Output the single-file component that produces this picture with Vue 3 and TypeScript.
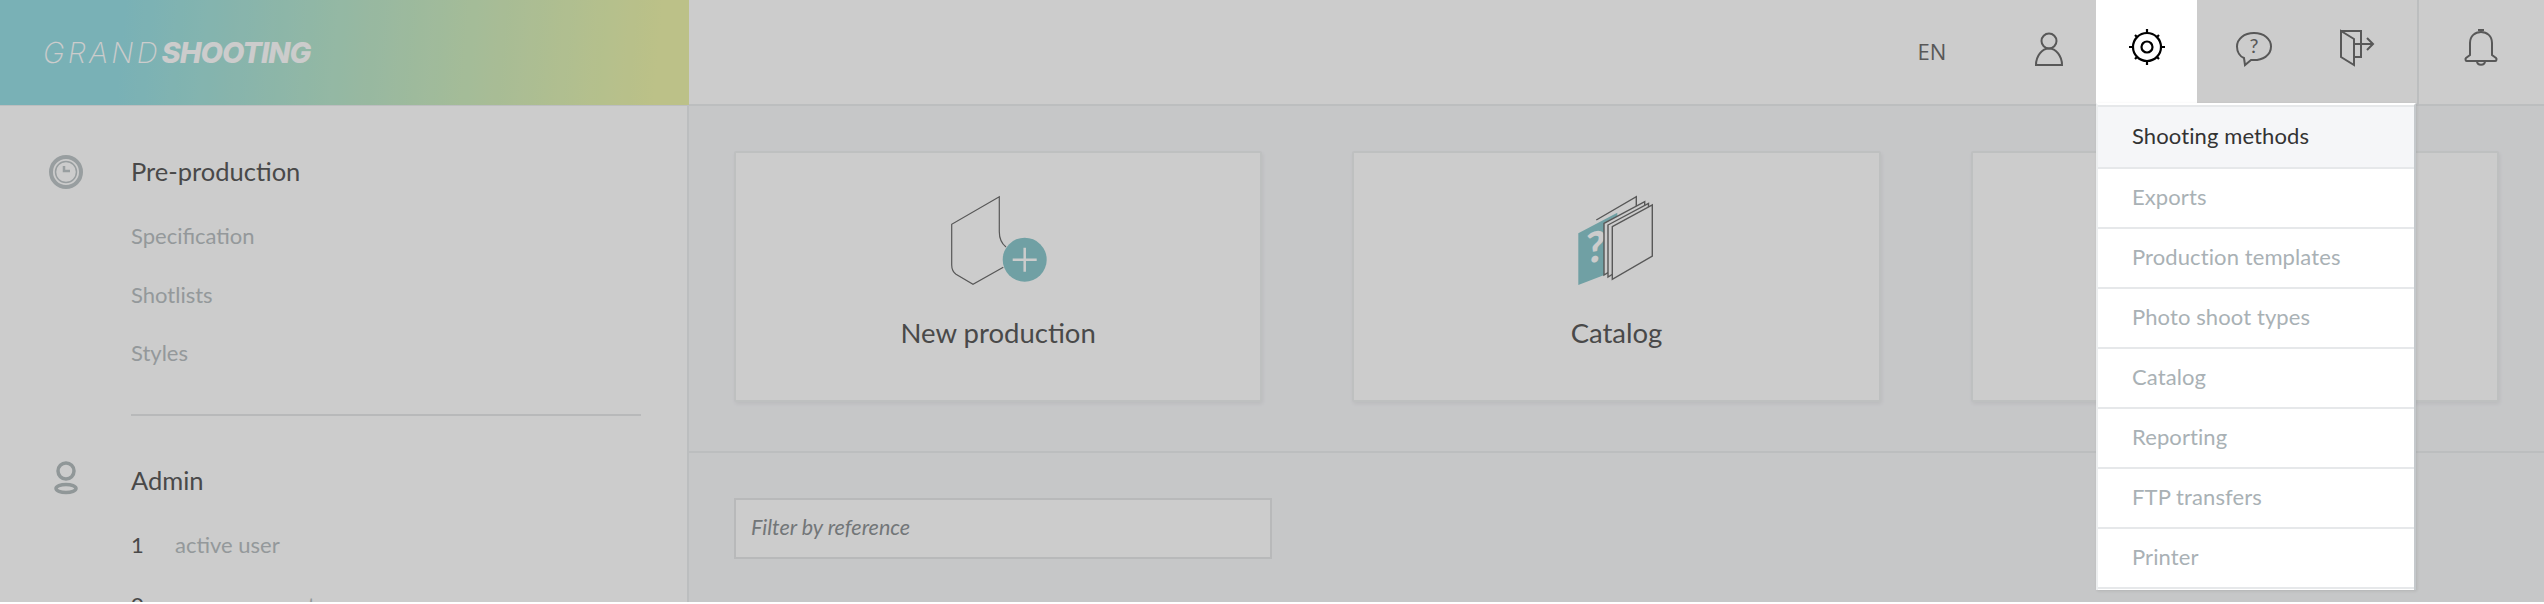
<script setup lang="ts">
const menuItems = [
  'Shooting methods',
  'Exports',
  'Production templates',
  'Photo shoot types',
  'Catalog',
  'Reporting',
  'FTP transfers',
  'Printer',
]

const preProduction = ['Specification', 'Shotlists', 'Styles']

const adminStats = [
  { count: 1, label: 'active user' },
  { count: 0, label: 'access request' },
]
</script>

<template>
  <div class="page">
    <header class="topbar">
      <div class="logo">
        <span class="logo-light">GRAND</span><span class="logo-bold">SHOOTING</span>
      </div>
      <div class="actions">
        <span class="lang">EN</span>
        <button class="action action-user">
          <svg width="30" height="34" viewBox="0 0 30 34" fill="none" stroke="#6e6e6e" stroke-width="2">
            <circle cx="15" cy="9" r="7.500" />
            <path d="M2 33C2 24 8 16.500 15 16.500C22 16.500 28 24 28 33Z" />
          </svg>
        </button>
        <button class="action action-settings">
          <svg width="40" height="40" viewBox="0 0 40 40" fill="none" stroke="#000" stroke-width="2.200">
            <circle cx="20" cy="20" r="14" />
            <circle cx="20" cy="20" r="5.500" />
            <path d="M20 2V6M20 34V38M2 20H6M34 20H38M8 8L10.500 10.500M32 8L29.500 10.500M8 32L10.500 29.500M32 32L29.500 29.500" />
          </svg>
        </button>
        <button class="action action-help">
          <svg width="40" height="36" viewBox="0 0 40 36" fill="none" stroke="#6e6e6e" stroke-width="2">
            <path d="M20 2C10 2 3 8 3 15.500C3 21 6 25.500 10 27L11 34L17 29C29 30 37 24 37 15.500C37 8 30 2 20 2Z" />
            <text x="20" y="22" class="help-mark" text-anchor="middle">?</text>
          </svg>
        </button>
        <button class="action action-logout">
          <svg width="36" height="38" viewBox="0 0 36 38" fill="none" stroke="#6e6e6e" stroke-width="2">
            <path d="M2 2H22V28H15" />
            <path d="M2 2L15 10V36L2 28Z" />
            <path d="M15 15H34M28 9L34 15L28 21" />
          </svg>
        </button>
        <button class="action action-bell">
          <svg width="36" height="38" viewBox="0 0 36 38" fill="none" stroke="#6e6e6e" stroke-width="2">
            <path d="M15 2H21" />
            <path d="M7 27V15C7 8 12 4 18 4C24 4 29 8 29 15V27L33 30C34 31 33.500 33 32 33H4C2.500 33 2 31 3 30Z" />
            <path d="M14 33C14 38 22 38 22 33" />
          </svg>
        </button>
      </div>
    </header>

    <div class="body">
      <aside class="sidebar">
        <section class="nav-group nav-pre">
          <svg class="nav-icon" width="36" height="36" viewBox="0 0 36 36" fill="none" stroke="#bfc6c8">
            <circle cx="18" cy="18" r="15" stroke-width="4" />
            <circle cx="18" cy="18" r="10.500" stroke-width="1.500" />
            <path d="M16 12V17H22" stroke-width="2.500" />
          </svg>
          <div class="nav-content">
            <h2 class="nav-title">Pre-production</h2>
            <a v-for="item in preProduction" :key="item" class="nav-link">{{ item }}</a>
          </div>
        </section>
        <section class="nav-group nav-admin">
          <svg class="nav-icon" width="26" height="34" viewBox="0 0 26 34" fill="none" stroke="#b5bdbf" stroke-width="3.500">
            <ellipse cx="13" cy="10" rx="8" ry="8" />
            <ellipse cx="13" cy="27.500" rx="10" ry="4" />
          </svg>
          <div class="nav-content">
            <h2 class="nav-title">Admin</h2>
            <div v-for="stat in adminStats" :key="stat.label" class="stat">
              <span class="stat-count">{{ stat.count }}</span>
              <span class="stat-label">{{ stat.label }}</span>
            </div>
          </div>
        </section>
      </aside>

      <main class="main">
        <div class="cards">
          <div class="card">
            <svg class="card-icon" width="105" height="100" viewBox="0 0 105 100" fill="none">
              <path
                d="M60 57C55 53 53.300 48 53.300 41.700V6.700L5.700 34.300V75C5.700 79 7 82 10 84.300L27 94.300L57.300 77.300"
                stroke="#6e6e6e"
                stroke-width="1.200"
              />
              <circle cx="78.700" cy="69.700" r="22" fill="#8dc9cd" />
              <path d="M66.700 69.700H90.700M78.700 57.700V81.700" stroke="#fff" stroke-width="2.500" />
            </svg>
            <span class="card-label">New production</span>
          </div>
          <div class="card">
            <svg class="card-icon" width="84" height="100" viewBox="0 0 84 100" fill="none">
              <path d="M4.300 43.300L43.300 22.700V80L4.300 95Z" fill="#8dc9cd" />
              <text x="0" y="0" class="catalog-mark" transform="translate(12 74) skewY(-12)">?</text>
              <g stroke="#6e6e6e" stroke-width="1.400">
                <path d="M22.300 30L62.300 6.700V30" />
                <path d="M30 33.300L70.700 11.700V60L30 85Z" fill="#fff" />
                <path d="M34 35L74.500 13.500V62L34 87Z" fill="#fff" />
                <path d="M38.300 36.700L78.300 15V66L38.300 89.300Z" fill="#fff" />
              </g>
            </svg>
            <span class="card-label">Catalog</span>
          </div>
          <div class="card"></div>
        </div>
        <div class="filter-row">
          <input class="filter" type="text" placeholder="Filter by reference" />
        </div>
      </main>
    </div>

    <div class="overlay"></div>

    <ul class="menu">
      <li v-for="(item, i) in menuItems" :key="item" class="menu-item" :class="{ active: i === 0 }">
        {{ item }}
      </li>
    </ul>
  </div>
</template>

<style>
html,
body {
  margin: 0;
  background: #fff;
}
</style>

<style scoped>
.page {
  position: relative;
  height: 602px;
  overflow: hidden;
  background: #fff;
  font-family: Lato, "Noto Sans", sans-serif;
}
.overlay {
  position: absolute;
  inset: 0;
  z-index: 10;
  background: rgba(0, 0, 0, 0.2);
}
.topbar {
  display: flex;
  height: 106px;
  box-sizing: border-box;
  border-bottom: 2px solid #eceeef;
}
.logo {
  width: 689px;
  height: 105px;
  padding-left: 43px;
  box-sizing: border-box;
  display: flex;
  align-items: center;
  background: linear-gradient(95deg, #98dee4 18%, #ebf2aa 95%);
  color: #fff;
  font-family: Inter, sans-serif;
  font-size: 29px;
  font-style: italic;
}
.logo-light {
  font-weight: 200;
  letter-spacing: 3.200px;
  margin-right: 1px;
}
.logo-bold {
  font-weight: 800;
  letter-spacing: -1px;
}
.actions {
  flex: 1;
  display: flex;
  justify-content: flex-end;
  height: 103px;
}
.lang {
  align-self: center;
  width: 140px;
  padding-bottom: 2px;
  text-align: center;
  font-size: 22px;
  color: #6e6e6e;
  font-family: "Open Sans", sans-serif;
}
.action {
  padding: 0;
  border: 0;
  background: none;
  display: flex;
  align-items: center;
  justify-content: center;
}
.action-user {
  width: 94px;
  padding-bottom: 6px;
}
.action-settings {
  position: relative;
  z-index: 20;
  width: 101px;
  background: #fff;
  padding-bottom: 10px;
}
.action-help {
  width: 114px;
  padding-bottom: 6px;
}
.action-logout {
  width: 106px;
  padding: 0 14px 8px 0;
  box-sizing: border-box;
}
.action-bell {
  width: 127px;
  height: 105px;
  box-sizing: border-box;
  border-left: 2px solid #eceeef;
  padding: 0 2px 12px 0;
}
.help-mark {
  font-family: Lato, sans-serif;
  font-size: 20px;
  fill: #6e6e6e;
  stroke: none;
}
.catalog-mark {
  font-family: Lato, sans-serif;
  font-size: 42px;
  font-weight: 900;
  fill: #fff;
}
.body {
  display: flex;
}
.sidebar {
  width: 689px;
  height: 496px;
  box-sizing: border-box;
  flex-shrink: 0;
  border-right: 2px solid #eceeef;
  padding: 45px 46px 0 0;
}
.nav-group {
  display: grid;
  grid-template-columns: 131px 1fr;
}
.nav-icon {
  justify-self: center;
}
.nav-pre .nav-icon {
  margin-top: 3px;
}
.nav-pre {
  padding-bottom: 44px;
}
.nav-pre .nav-content {
  border-bottom: 2px solid #e6e8e9;
  padding-bottom: 17px;
}
.nav-admin .nav-icon {
  margin-top: 1px;
}
.nav-title {
  margin: 0 0 30px;
  font-size: 25.500px;
  line-height: 40px;
  font-weight: 400;
  color: #5c5c5c;
}
.nav-link {
  display: block;
  height: 58.500px;
  line-height: 30px;
  font-size: 22px;
  color: #b9bfc2;
}
.stat {
  display: flex;
  height: 60px;
  font-size: 22px;
  line-height: 30px;
}
.stat-count {
  width: 44px;
  color: #5c5c5c;
}
.stat-label {
  color: #b9bfc2;
}
.main {
  flex: 1;
  background: #f8f9fb;
  min-width: 0;
}
.cards {
  display: grid;
  grid-template-columns: repeat(3, 1fr);
  gap: 90px;
  padding: 45px 45px 49px 45px;
  border-bottom: 2px solid #eceeef;
}
.card {
  height: 251px;
  box-sizing: border-box;
  background: #fff;
  border: 2px solid #eef0f1;
  border-radius: 2px;
  box-shadow: 1px 2px 4px rgba(0, 0, 0, 0.06);
  display: flex;
  flex-direction: column;
  align-items: center;
  padding-top: 37px;
}
.card-icon {
  height: 100px;
}
.card-label {
  margin-top: 23px;
  font-size: 27.500px;
  line-height: 40px;
  color: #5c5c5c;
}
.filter-row {
  padding: 45px 46px 0 45px;
}
.filter {
  display: block;
  width: 538px;
  height: 61px;
  box-sizing: border-box;
  padding: 0 15px 3px;
  background: #fff;
  border: 2px solid #e6e8e9;
  outline: none;
  font-family: Lato, sans-serif;
  font-size: 21.500px;
  font-style: italic;
}
.filter::placeholder {
  color: #8f9497;
}
.menu {
  position: absolute;
  z-index: 20;
  top: 103px;
  left: 2096px;
  width: 320px;
  margin: 0;
  padding: 0 0 1px;
  box-sizing: border-box;
  list-style: none;
  background: #fff;
  border-top: 2px solid #fff;
  border-left: 2px solid #eceeef;
  border-right: 2px solid #c5c9cc;
  box-shadow: 1px 1px 3px rgba(0, 0, 0, 0.1);
}
.menu-item {
  height: 60px;
  box-sizing: border-box;
  padding-left: 34px;
  line-height: 56px;
  font-size: 22px;
  letter-spacing: 0.100px;
  color: #a9b1b5;
  border-bottom: 2px solid #e6e8ea;
}
.menu-item.active {
  height: 64px;
  background: #f5f6f8;
  color: #333;
  line-height: 58px;
  border-top: 2px solid #e6e8ea;
}
</style>
